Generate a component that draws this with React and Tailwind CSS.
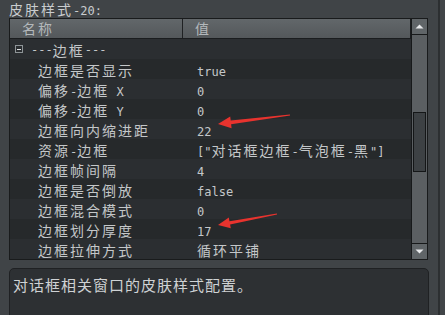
import React from "react";

const rows = [
  ["边框是否显示", "true"],
  ["偏移-边框 X", "0"],
  ["偏移-边框 Y", "0"],
  ["边框向内缩进距", "22"],
  ["资源-边框", '["对话框边框-气泡框-黑"]'],
  ["边框帧间隔", "4"],
  ["边框是否倒放", "false"],
  ["边框混合模式", "0"],
  ["边框划分厚度", "17"],
  ["边框拉伸方式", "循环平铺"],
];

// ascii runs in mono, the rest in the CJK face
const Txt = ({ text }) => {
  const parts = text.match(/[\x00-\x7f]+|[^\x00-\x7f]+/g) || [];
  return parts.map((p, i) =>
    /^[\x00-\x7f]/.test(p) ? (
      <span
        key={i}
        className="font-['DejaVu_Sans_Mono',monospace] text-[12px] tracking-normal whitespace-pre"
      >
        {p}
      </span>
    ) : (
      <span key={i}>{p}</span>
    ),
  );
};

const App = () => {
  return (
    <div className="relative w-[445px] h-[315px] overflow-hidden bg-[#404447] flex font-['Noto_Sans_CJK_SC',sans-serif] text-[14px] tracking-[2px]">
      <div className="w-[438px] h-full flex flex-col pl-[9px] pr-[10px]">
        {/* title */}
        <div className="h-[18px] leading-[18px] text-[#c9ccce] pl-[0px] whitespace-nowrap">
          <Txt text="皮肤样式-20:" />
        </div>

        {/* property table */}
        <div className="w-[419px] h-[242px] border border-[#191b1c] flex">
          <div className="w-[402px] h-[240px] overflow-hidden flex flex-col">
            <div className="h-[20px] shrink-0 flex border-b border-[#1b1d1f] bg-gradient-to-b from-[#62676a] to-[#54585b] text-[#b3b8bb] leading-[19px] border-r">
              <div className="w-[173px] pl-[12px] border-r border-[#1f2123]">名称</div>
              <div className="flex-1 pl-[12px]">值</div>
            </div>

            <div className="h-[20px] shrink-0 flex items-start bg-[#2b2e31] text-[#c4c7c9] leading-[20px] pt-[1px]">
              <div className="w-[8px] h-[8px] mt-[5px] ml-[5px] mr-[8px] border border-[#8e9497] bg-[#2a2d30] flex items-center justify-center">
                <div className="w-[4px] h-[1px] bg-[#e2e4e5]" />
              </div>
              <Txt text="---边框---" />
            </div>

            {rows.map(([name, value], i) => (
              <div
                key={name}
                className={`h-[20px] shrink-0 flex leading-[20px] pt-[1px] text-[#c4c7c9] whitespace-nowrap ${
                  i % 2 === 0 ? "bg-[#26292b]" : "bg-[#2b2e31]"
                }`}
              >
                <div className="w-[174px] pl-[28px]">
                  <Txt text={name} />
                </div>
                <div className="flex-1 pl-[13px]">
                  <Txt text={value} />
                </div>
              </div>
            ))}
          </div>

          {/* scrollbar */}
          <div className="w-[16px] h-[240px] border-l border-[#17191a] flex flex-col bg-[#5b5f62]">
            <div className="h-[16px] border-b border-[#17191a] bg-[#606568] flex items-center justify-center">
              <svg width="9" height="5" viewBox="0 0 9 5">
                <polygon points="0.5,4.5 4.5,0.5 8.5,4.5" fill="#e8eaeb" />
              </svg>
            </div>
            <div className="flex-1 pt-[77px] pl-[1px]">
              <div className="w-[13px] h-[60px] border border-[#141617] bg-[#3d4144]" />
            </div>
            <div className="h-[16px] border-t border-[#17191a] bg-[#606568] flex items-center justify-center">
              <svg width="9" height="5" viewBox="0 0 9 5">
                <polygon points="0.5,0.5 8.5,0.5 4.5,4.5" fill="#e8eaeb" />
              </svg>
            </div>
          </div>
        </div>

        {/* description */}
        <div className="mt-[8px] w-[420px] h-[70px] shrink-0 rounded-[5px] border border-[#1f2123] bg-[#2d3033] pl-[3px] pt-[4px] text-[15px] tracking-[1px] leading-[24px] text-[#cfd2d4] whitespace-nowrap">
          对话框相关窗口的皮肤样式配置。
        </div>
      </div>

      <div className="w-[2px] h-full bg-[#2c2f31]" />
      <div className="flex-1 h-full bg-[#414548]" />

      {/* red annotation arrows */}
      <svg className="absolute left-0 top-0" width="445" height="315" viewBox="0 0 445 315">
        <polygon
          points="218,124 231.6,128.3 231.1,124.2 290.1,115.5 289.9,114.5 230.7,120.6 230.2,116.4"
          fill="#e8332e"
        />
        <polygon
          points="218,225 230.8,228.2 230.1,224.4 277.1,214.5 276.9,213.5 229.5,221.2 228.8,217.4"
          fill="#e8332e"
        />
      </svg>
    </div>
  );
};

export default App;
